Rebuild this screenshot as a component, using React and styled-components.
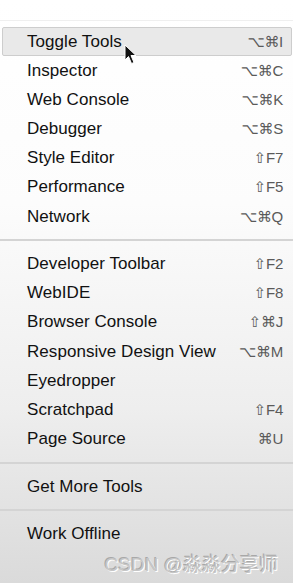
import React from 'react'
import styled, { createGlobalStyle } from 'styled-components'

const GlobalStyle = createGlobalStyle`
    html, body {
        margin: 0;
        padding: 0;
    }
    body {
        font-family: "Liberation Sans", "DejaVu Sans", sans-serif;
        background: #fff;
    }
`

const Menu = styled.div`
    position: relative;
    width: 293px;
    height: 583px;
    overflow: hidden;
    background: linear-gradient(to bottom, #ffffff 0%, #fcfcfc 35%, #eeeeee 70%, #dadada 100%);
`

const TopStrip = styled.div`
    height: 20px;
    border-bottom: 1px solid #efefef;
    margin-bottom: 6px;
`

const Item = styled.div`
    display: flex;
    align-items: center;
    justify-content: space-between;
    height: 29.17px;
    margin: 0 1px 0 2px;
    padding: 0 8px 0 24px;
    box-sizing: border-box;
    border: 1px solid ${({ $active }) => ($active ? '#cdcdcd' : 'transparent')};
    border-radius: 2px;
    background: ${({ $active }) => ($active ? '#e9e9e9' : 'transparent')};
`

const Label = styled.span`
    font-size: 17px;
    color: #111111;
    letter-spacing: 0.05px;
`

const Shortcut = styled.span`
    font-size: 15px;
    color: #5a5a5a;
    letter-spacing: -0.3px;
`

const Separator = styled.div`
    height: 2px;
    margin: 8px 0 8.5px;
    background: #d4d4d4;
`

const Cursor = styled.svg`
    position: absolute;
    left: 124px;
    top: 44px;
`

const Watermark = styled.div`
    position: absolute;
    right: 15px;
    bottom: 7px;
    font-family: "Liberation Sans", "Noto Sans CJK SC", sans-serif;
    font-size: 19px;
    color: #c6c6c6;
    text-shadow: 1px 1px 0 #ffffff, -1px -1px 0 #a8a8a8;
`

const groups = [
    [
        ['Toggle Tools', '⌥⌘I'],
        ['Inspector', '⌥⌘C'],
        ['Web Console', '⌥⌘K'],
        ['Debugger', '⌥⌘S'],
        ['Style Editor', '⇧F7'],
        ['Performance', '⇧F5'],
        ['Network', '⌥⌘Q'],
    ],
    [
        ['Developer Toolbar', '⇧F2'],
        ['WebIDE', '⇧F8'],
        ['Browser Console', '⇧⌘J'],
        ['Responsive Design View', '⌥⌘M'],
        ['Eyedropper', ''],
        ['Scratchpad', '⇧F4'],
        ['Page Source', '⌘U'],
    ],
    [['Get More Tools', '']],
    [['Work Offline', '']],
]

const App = () => (
    <>
        <GlobalStyle />
        <Menu>
            <TopStrip />
            {groups.map((group, g) => (
                <React.Fragment key={g}>
                    {g > 0 && <Separator />}
                    {group.map(([label, keys]) => (
                        <Item key={label} $active={label === 'Toggle Tools'}>
                            <Label>{label}</Label>
                            <Shortcut>{keys}</Shortcut>
                        </Item>
                    ))}
                </React.Fragment>
            ))}
            <Cursor width="14" height="22" viewBox="0 0 14 22">
                <path
                    d="M1 1 L1 16 L4.5 12.5 L7.5 19.5 L10 18.5 L7 11.5 L12 11.5 Z"
                    fill="#111"
                    stroke="#fff"
                    strokeWidth="1"
                    strokeLinejoin="round"
                />
            </Cursor>
            <Watermark>CSDN @淼淼分享师</Watermark>
        </Menu>
    </>
)

export default App
